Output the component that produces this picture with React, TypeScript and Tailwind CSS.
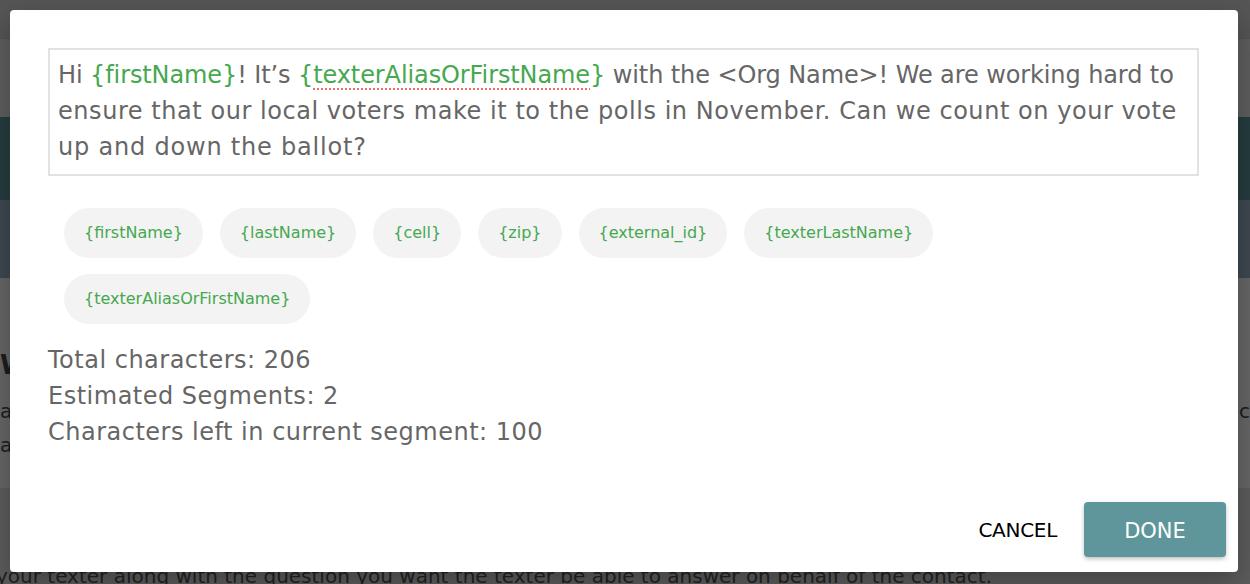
import React from 'react';

const tags = [
  '{firstName}',
  '{lastName}',
  '{cell}',
  '{zip}',
  '{external_id}',
  '{texterLastName}',
  '{texterAliasOrFirstName}',
];

const stats = [
  'Total characters: 206',
  'Estimated Segments: 2',
  'Characters left in current segment: 100',
];

const Green: React.FC<{ children: React.ReactNode; squiggle?: boolean }> = ({ children, squiggle }) => (
  <span className="text-[#46a84f]">
    {'{'}
    <span
      className={
        squiggle
          ? 'underline decoration-dotted decoration-[#f26b6b] decoration-2 underline-offset-[5px]'
          : ''
      }
    >
      {children}
    </span>
    {'}'}
  </span>
);

// page behind the dialog, dimmed by the overlay
const Backdrop: React.FC = () => (
  <div className="w-[1250px] h-[584px] overflow-hidden bg-[#676767] font-['DejaVu_Sans',sans-serif]">
    <div className="h-[38px] bg-[#565656]" />
    <div className="h-[79px] bg-[#5f5f5f] border-t border-[#525252]" />
    <div className="h-[83px] bg-[#263d3f]" />
    <div className="h-[78px] bg-[#3f4950]" />
    <div className="h-[210px] flex justify-between text-[#1c1c1c]">
      <div className="w-[10px] overflow-hidden pt-[72px] whitespace-nowrap">
        <div className="text-[26px] font-bold leading-[30px]">W</div>
        <div className="mt-[14px] text-[20px] leading-[34px]">ar</div>
        <div className="text-[20px] leading-[34px]">a</div>
      </div>
      <div className="w-[12px] overflow-hidden pt-[116px] whitespace-nowrap flex justify-end">
        <div className="text-[20px] leading-[34px]">ec</div>
      </div>
    </div>
    <div className="border-t border-[#5c5c5c] bg-[#5d5d5d] h-[100px] pt-[75px]">
      <div className="text-[20px] leading-[24px] whitespace-nowrap -ml-[4px] text-[#222]">
        your texter along with the question you want the texter be able to answer on behalf of the contact.
      </div>
    </div>
  </div>
);

export default function App() {
  return (
    <div className="relative w-[1250px] h-[584px] overflow-hidden">
      <Backdrop />

      <div className="absolute left-[10px] top-[10px] w-[1228px] h-[562px] bg-white rounded-[4px] shadow-[0_10px_30px_rgba(0,0,0,0.3)] font-['DejaVu_Sans',sans-serif] flex flex-col">
        <div className="pl-[38px] pr-[39px] pt-[38px] flex-1">
          {/* script body */}
          <div className="border-2 border-[#e2e2e2] px-[8px] pt-[7px] pb-[9px] text-[24px] leading-[36px] text-[#666666] whitespace-nowrap">
            <div className="tracking-[-0.1px]">
              Hi <Green>firstName</Green>! It’s <Green squiggle>texterAliasOrFirstName</Green> with the &lt;Org Name&gt;! We are working hard to
            </div>
            <div className="tracking-[0.55px]">ensure that our local voters make it to the polls in November. Can we count on your vote</div>
            <div className="tracking-[0.8px]">up and down the ballot?</div>
          </div>

          {/* insertable fields */}
          <div className="mt-[32px] pl-[16px] flex flex-wrap gap-x-[17px] gap-y-[16px] w-[900px]">
            {tags.map((tag) => (
              <button
                key={tag}
                className="h-[50px] px-[20px] rounded-full bg-[#f3f3f3] text-[16px] text-[#46a84f] leading-none"
              >
                {tag}
              </button>
            ))}
          </div>

          {/* counters */}
          <div className="mt-[18px] text-[24px] leading-[36px] tracking-[0.5px] text-[#666666]">
            {stats.map((s) => (
              <div key={s}>{s}</div>
            ))}
          </div>
        </div>

        <div className="flex items-center justify-end gap-[27px] pr-[12px] pb-[15px]">
          <button className="text-[20px] text-black tracking-[-0.3px]">CANCEL</button>
          <button className="w-[142px] h-[55px] rounded-[4px] bg-[#5e969c] text-white text-[21px] leading-none pt-[3px] shadow-[0_2px_4px_rgba(0,0,0,0.25)]">
            DONE
          </button>
        </div>
      </div>
    </div>
  );
}
